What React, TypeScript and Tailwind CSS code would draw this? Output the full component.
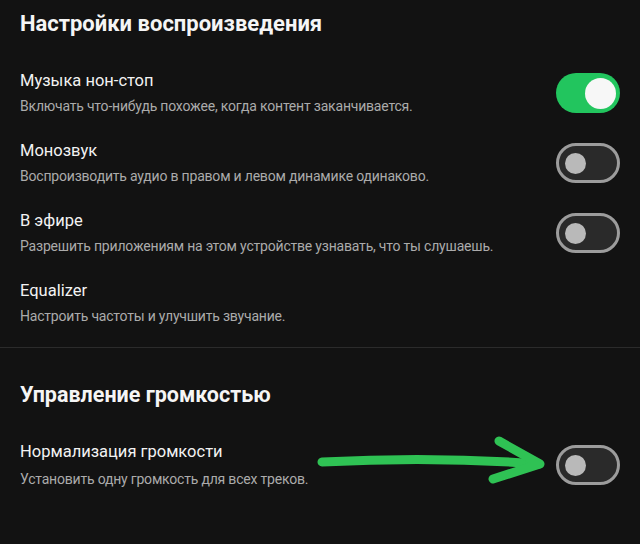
import React from "react";

type Row = { title: string; desc: string; on?: boolean; toggle: boolean };

const playback: Row[] = [
  { title: "Музыка нон-стоп", desc: "Включать что-нибудь похожее, когда контент заканчивается.", on: true, toggle: true },
  { title: "Монозвук", desc: "Воспроизводить аудио в правом и левом динамике одинаково.", toggle: true },
  { title: "В эфире", desc: "Разрешить приложениям на этом устройстве узнавать, что ты слушаешь.", toggle: true },
  { title: "Equalizer", desc: "Настроить частоты и улучшить звучание.", toggle: false },
];

function Toggle({ on }: { on?: boolean }) {
  if (on) {
    return (
      <div className="flex h-[40px] w-[64px] shrink-0 items-center justify-end rounded-full bg-[#22c55e] pr-[4px]">
        <div className="h-[31px] w-[31px] rounded-full bg-[#f7f7f7]" />
      </div>
    );
  }
  return (
    <div className="flex h-[40px] w-[64px] shrink-0 items-center rounded-full border-[3px] border-[#9c9c9c] bg-[#2a2a2a] pl-[6px]">
      <div className="h-[21px] w-[21px] rounded-full bg-[#b9b9b9]" />
    </div>
  );
}

function SettingRow({ row }: { row: Row }) {
  return (
    <div className="flex items-center justify-between">
      <div className="flex flex-col">
        <div className="text-[16.5px] leading-[20px] text-[#f2f2f2]">{row.title}</div>
        <div className="mt-[6px] text-[14px] leading-[18px] tracking-[-0.2px] text-[#ababab]">{row.desc}</div>
      </div>
      {row.toggle && <Toggle on={row.on} />}
    </div>
  );
}

export default function App() {
  return (
    <div
      className="min-h-[544px] w-[640px] bg-[#121212] pb-[40px]"
      style={{ fontFamily: "Roboto, 'Noto Sans', sans-serif" }}
    >
      <div className="px-5 pt-[10px]">
        <h1 className="text-[22px] font-bold leading-[28px] text-[#f5f5f5]">Настройки воспроизведения</h1>
        <div className="mt-[33px] flex flex-col gap-[26px]">
          {playback.map((r) => (
            <SettingRow key={r.title} row={r} />
          ))}
        </div>
      </div>

      <div className="mt-[22px] h-px bg-[#2b2b2b]" />

      <div className="px-5 pt-[33px]">
        <h2 className="text-[21.5px] font-bold leading-[28px] text-[#f5f5f5]">Управление громкостью</h2>
        <div className="relative mt-[33px] flex items-center justify-between">
          <div className="flex flex-col">
            <div className="text-[16.5px] leading-[20px] text-[#f2f2f2]">Нормализация громкости</div>
            <div className="mt-[8px] text-[14px] leading-[18px] tracking-[-0.2px] text-[#ababab]">
              Установить одну громкость для всех треков.
            </div>
          </div>
          <Toggle />
          {/* hand-drawn pointer towards the switch */}
          <svg
            className="pointer-events-none absolute left-[290px] top-[-6px]"
            width="240"
            height="56"
            viewBox="0 0 240 56"
            fill="none"
          >
            <path
              d="M12 26 C 70 23, 150 22, 229 28"
              stroke="#2fc254"
              strokeWidth="9"
              strokeLinecap="round"
            />
            <path
              d="M189 5 L 230 28 L 183 43"
              stroke="#2fc254"
              strokeWidth="9"
              strokeLinecap="round"
              strokeLinejoin="round"
            />
          </svg>
        </div>
      </div>
    </div>
  );
}
